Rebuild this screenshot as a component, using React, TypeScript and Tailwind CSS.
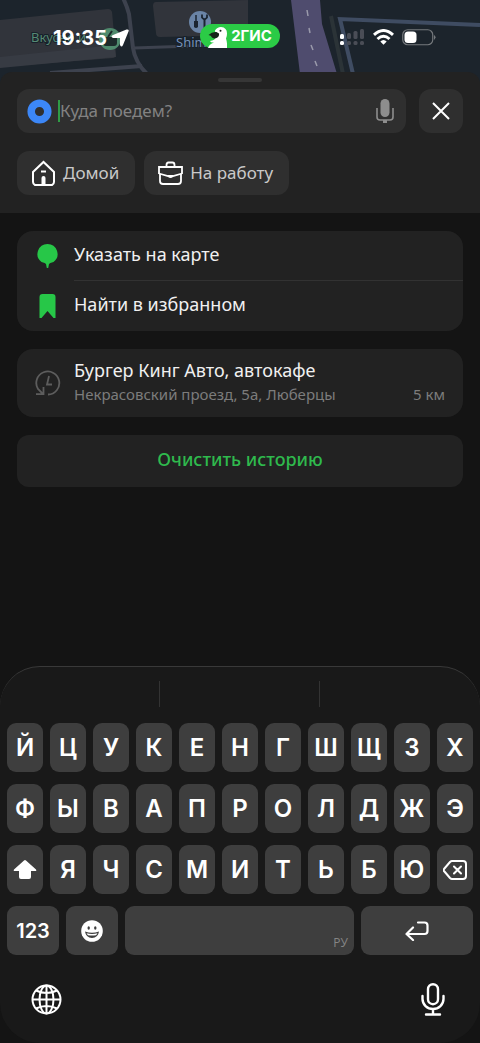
import type { ReactNode } from 'react';

const letterRows = ['ЙЦУКЕНГШЩЗХ', 'ФЫВАПРОЛДЖЭ'];
const lastLetters = 'ЯЧСМИТЬБЮ';

function MapBackdrop() {
  return (
    <svg
      className="absolute inset-0 h-full w-full"
      viewBox="0 0 480 84"
      preserveAspectRatio="xMidYMin slice"
      aria-hidden="true"
    >
      <rect width="480" height="84" fill="#1c242c" />
      <path d="M0 20 108 9q3 0 4 3l4 42q0 3-3 4L0 67Z" fill="#31343b" />
      <path d="M0 57 114 45l2 12L0 68Z" fill="#373b43" />
      <path d="M156 2 248 0v35l-88 2q-4 0-4-4l-3-27q0-4 3-4Z" fill="#31343b" />
      <path d="M123-2q4 8 6 16l4 34q2 14 14 26" fill="none" stroke="#3d424e" strokeWidth="4" />
      <path d="M134 48 250 44" stroke="#3d424e" strokeWidth="3" />
      <path d="M50 73 142 66" stroke="#3d424e" strokeWidth="4" />
      <path d="M291 0h29l2 24 15 50h-37Z" fill="#4f4c6e" />
      <path d="M307 10l1 6M309 28l1 5M311 45l2 5M315 61l2 5" stroke="#9a9aab" strokeWidth="1.5" />
      <path d="M331 16l12 58" stroke="#2b3337" strokeWidth="4" />
      <path d="M480 25 340 19l13 55" fill="none" stroke="#3f4c62" strokeWidth="4" />
      <circle cx="110" cy="39" r="11" fill="#4f8a6d" />
      <path d="M104 38h12v5q0 2-2 2h-8q-2 0-2-2ZM108 37l4-6" fill="#1c2b2b" stroke="#1c2b2b" strokeWidth="2" />
      <circle cx="200" cy="22" r="11" fill="#6a84a6" />
      <path d="M196 15v6" stroke="#1b2531" strokeWidth="1.500" />
      <path d="M194 21h4v6q-2 2-4 0Z" fill="#1b2531" />
      <path d="M204.500 19v9" stroke="#1b2531" strokeWidth="2" />
      <path d="M202 14.500v3q2.500 3.500 5 0v-3" stroke="#1b2531" strokeWidth="1.800" fill="none" />
      <g fontFamily="'Noto Sans', sans-serif" fontSize="13" stroke="#17202a" strokeWidth="2" paintOrder="stroke">
        <text x="31" y="42" fill="#578a74">Вкусно и</text>
        <text x="176" y="47" fill="#7591b8">Shimas</text>
      </g>
    </svg>
  );
}

function StatusBar() {
  return (
    <div className="relative grid grid-cols-3 items-center pt-[22px]">
      <div className="flex items-center justify-center gap-1 pt-1 pl-[22px]">
        <span className="font-[Inter,sans-serif] text-xl leading-6 font-bold text-white">19:35</span>
        <svg width="18" height="18" viewBox="0 0 18 18" fill="#fff" aria-hidden="true">
          <path d="M17.500 2.500 12 16q-1.500 3-3 0V9H2Q-1 7.500 2 6L15.500.5Q18.500 0 17.500 2.500Z" />
        </svg>
      </div>
      <div className="flex justify-center">
        <span className="flex h-6 items-center gap-1 rounded-full bg-[#2bcb46] pr-2 pl-2">
          <svg width="19" height="24" viewBox="0 0 19 24" aria-hidden="true">
            <path d="M7 6.500Q9 3 13 3q6 .5 6 6.500 0 3-1 5 1.500 5 1 9.500H0q1-4 6-5.500-3 .5-4-1.500 5-.5 6-4Z" fill="#fff" />
            <path d="M8.500 8Q4 7.500.5 11q2.500 0 3.500 2.500 2 1.500 4.500.5 3-1.500 2.500-4.500Z" fill="#16251a" />
            <circle cx="12.500" cy="6.800" r="1" fill="#16251a" />
          </svg>
          <span className="font-[Inter,sans-serif] text-[15px] leading-6 font-bold text-white">2ГИС</span>
        </span>
      </div>
      <div className="flex items-center justify-end gap-2 pt-0.5 pr-[44px]">
        <svg width="25" height="18" viewBox="0 0 25 18" fill="#4a4d56" aria-hidden="true">
          <rect y="6" width="4" height="5" rx="1.500" fill="#fff" />
          <rect y="13" width="4" height="4" rx="1.500" fill="#fff" />
          <rect x="7" y="5" width="4" height="6" rx="1.500" />
          <rect x="7" y="13" width="4" height="4" rx="1.500" />
          <rect x="13.500" y="3" width="4" height="8" rx="1.500" />
          <rect x="13.500" y="13" width="4" height="4" rx="1.500" />
          <rect x="20" y="1" width="4" height="10" rx="1.500" />
          <rect x="20" y="13" width="4" height="4" rx="1.500" />
        </svg>
        <svg width="21" height="16" viewBox="0 0 21 16" fill="none" stroke="#fff" strokeWidth="3" aria-hidden="true">
          <path d="M1 5.800q9.500-8.500 19 0M4.500 10q6-5.500 12 0" />
          <path d="M7.300 12.500q3.200-3 6.400 0l-3.200 3.300Z" fill="#fff" stroke="none" />
        </svg>
        <svg width="34" height="17" viewBox="0 0 34 17" aria-hidden="true">
          <rect x=".75" y=".75" width="30" height="15" rx="5" fill="none" stroke="#74787c" strokeWidth="1.200" />
          <rect x="2.500" y="2.500" width="12" height="11.500" rx="3.500" fill="#fff" />
          <path d="M32 6q3 2 0 5Z" fill="#74787c" />
        </svg>
      </div>
    </div>
  );
}

function SearchPanel() {
  return (
    <section className="relative -mt-3 rounded-t-xl bg-[#222222] px-[17px] pb-[18px]">
      <div className="mx-auto h-[17px] w-11 pt-1.5">
        <div className="h-1 rounded-full bg-[#363636]" />
      </div>
      <div className="flex gap-[13px]">
        <div className="flex h-11 flex-1 items-center rounded-xl bg-[#2f2f2f] pr-3 pl-2.5">
          <svg width="25" height="25" viewBox="0 0 25 25" aria-hidden="true">
            <circle cx="12.500" cy="12.500" r="8.300" fill="none" stroke="#3c87f7" strokeWidth="7.500" />
          </svg>
          <span className="ml-1.5 h-[22px] w-0.5 bg-[#2f9c45]" />
          <input
            type="text"
            aria-label="Куда поедем?"
            placeholder="Куда поедем?"
            className="min-w-0 flex-1 bg-transparent text-[17px] leading-6 text-white outline-none placeholder:text-[#828282]"
          />
          <button type="button" aria-label="Голосовой ввод">
            <svg width="18" height="26" viewBox="0 0 18 26" aria-hidden="true">
              <rect x="4.500" y="1" width="9" height="18" rx="4.500" fill="#8d8d8d" />
              <path d="M1 10v9q0 3 3 3h10q3 0 3-3v-9" fill="none" stroke="#8d8d8d" strokeWidth="1.600" />
              <path d="M7 22h4v3H7Z" fill="#8d8d8d" />
            </svg>
          </button>
        </div>
        <button
          type="button"
          aria-label="Закрыть"
          className="flex size-11 items-center justify-center rounded-xl bg-[#2f2f2f]"
        >
          <svg width="18" height="18" viewBox="0 0 18 18" stroke="#fff" strokeWidth="2" aria-hidden="true">
            <path d="M1 1l16 16M17 1 1 17" />
          </svg>
        </button>
      </div>
      <div className="mt-[18px] flex gap-[9px]">
        <button
          type="button"
          className="flex h-11 items-center gap-[7px] rounded-xl bg-[#2f2f2f] pr-4 pl-3.5 text-[17px] leading-6 text-[#c9c9c9]"
        >
          <svg width="25" height="26" viewBox="0 0 25 26" fill="none" stroke="#fff" strokeWidth="2" aria-hidden="true">
            <path d="M2 12 12.500 2 23 12v10q0 2-2 3H4q-2-1-2-3Z" />
            <path d="M10 11.500h5" />
            <path d="M10.500 24v-6q0-2 2-2t2 2v6Z" fill="#fff" stroke="none" />
          </svg>
          Домой
        </button>
        <button
          type="button"
          className="flex h-11 items-center gap-[7px] rounded-xl bg-[#2f2f2f] pr-4 pl-3.5 text-[17px] leading-6 text-[#c9c9c9]"
        >
          <svg width="25" height="24" viewBox="0 0 25 24" fill="none" stroke="#fff" strokeWidth="1.800" aria-hidden="true">
            <path d="M1 13V6h23v7M2 13v7q0 3 3 3h15q3 0 3-3v-7" />
            <path d="M8.500 6V4q0-2.500 2-2.500h4q2 0 2 2.500v2M1 12.500l9 2.500h5l9-2.500" />
            <path d="M10 14h5v2q-2.500 2-5 0Z" fill="#fff" stroke="none" />
          </svg>
          На работу
        </button>
      </div>
    </section>
  );
}

function Results() {
  return (
    <main className="flex flex-col gap-[18px] px-[17px] pt-[18px]">
      <div className="rounded-2xl bg-[#222222]">
        <button type="button" className="flex h-[49px] w-full items-center pl-5 text-left text-lg text-[#f0f0f0]">
          <svg width="21" height="26" viewBox="0 0 21 26" fill="#27c748" aria-hidden="true">
            <path d="M10.500 1a10 10 0 0 1 6 18q-4 1-4.500 2l-.8 4H9.800L9 21q-.5-1-4.500-2a10 10 0 0 1 6-18Z" />
          </svg>
          <span className="ml-4 pb-1">Указать на карте</span>
        </button>
        <div className="ml-[57px] h-px bg-[#323232]" />
        <button type="button" className="flex h-[50px] w-full items-center pl-5 text-left text-lg text-[#f0f0f0]">
          <svg width="21" height="26" viewBox="0 0 21 26" fill="#27c748" aria-hidden="true">
            <path d="M2.500 4q0-3 3-3h10q3 0 3 3v21h-2l-6-7-6 7h-2Z" />
          </svg>
          <span className="ml-4 pb-1">Найти в избранном</span>
        </button>
      </div>

      <a href="#place" className="flex h-[68px] items-center rounded-2xl bg-[#222222] px-[18px]">
        <svg width="26" height="26" viewBox="0 0 26 26" fill="none" stroke="#5d5d5d" strokeWidth="1.800" aria-hidden="true">
          <path d="M13 24.500A11.500 11.500 0 1 0 3 19l5 5M8.500 17v7.200H1M14 6l-2 8.500h5" />
        </svg>
        <span className="ml-[13px] flex min-w-0 flex-1 flex-col pb-0.5">
          <span className="text-lg leading-6 text-[#f0f0f0]">Бургер Кинг Авто, автокафе</span>
          <span className="flex justify-between text-[15px] leading-6 text-[#7c7c7c]">
            <span>Некрасовский проезд, 5а, Люберцы</span>
            <span>5 км</span>
          </span>
        </span>
      </a>

      <button type="button" className="h-[52px] rounded-xl bg-[#222222] pb-1 text-lg font-medium text-[#2fba4d]">
        Очистить историю
      </button>
    </main>
  );
}

function Key({ children, label, className = 'flex-1' }: { children?: ReactNode; label?: string; className?: string }) {
  return (
    <button
      type="button"
      aria-label={label}
      className={`flex h-[49px] min-w-0 items-center justify-center rounded-[9px] bg-[#3e3e3e] ${className}`}
    >
      {children}
    </button>
  );
}

function Keyboard() {
  return (
    <section
      aria-label="Клавиатура"
      className="mt-auto rounded-[40px] border-t border-[#393939] bg-[#191919] px-[7px] font-[Inter,sans-serif] text-2xl leading-7 font-semibold text-white"
    >
      <div className="-mx-[7px] grid h-14 grid-cols-3 pt-3.5 pb-4">
        <div className="border-r border-[#333333]" />
        <div className="border-r border-[#333333]" />
      </div>
      <div className="flex flex-col gap-3">
        {letterRows.map((row) => (
          <div key={row} className="flex gap-[7px]">
            {row.split('').map((letter) => (
              <Key key={letter}>{letter}</Key>
            ))}
          </div>
        ))}
        <div className="flex gap-[7px]">
          <Key label="Shift">
            <svg width="24" height="21" viewBox="0 0 24 21" fill="#fff" aria-hidden="true">
              <path d="M11 1.400q1-1 2 0L23 10.500q1 1.500-1 1.500h-4v6q0 2-2 2H8q-2 0-2-2v-6H2q-2 0-1-1.500Z" />
            </svg>
          </Key>
          {lastLetters.split('').map((letter) => (
            <Key key={letter}>{letter}</Key>
          ))}
          <Key label="Удалить">
            <svg width="24" height="20" viewBox="0 0 24 20" fill="none" stroke="#fff" strokeWidth="2" strokeLinecap="round" strokeLinejoin="round" aria-hidden="true">
              <path d="M9 1h11q3 0 3 3v12q0 3-3 3H9q-1 0-2-1l-6-7q-1-1 0-2l6-7q1-1 2-1ZM11 6.500l7 7M18 6.500l-7 7" />
            </svg>
          </Key>
        </div>
        <div className="flex gap-[7px]">
          <Key className="w-[52px]">
            <span className="text-xl">123</span>
          </Key>
          <Key label="Эмодзи" className="w-[52px]">
            <svg width="22" height="22" viewBox="0 0 22 22" aria-hidden="true">
              <circle cx="11" cy="11" r="10.800" fill="#fff" />
              <ellipse cx="7.700" cy="8" rx="1.200" ry="1.700" fill="#3e3e3e" />
              <ellipse cx="14.300" cy="8" rx="1.200" ry="1.700" fill="#3e3e3e" />
              <path d="M4 11.500q7 2.500 14 0-1 6.500-7 6.500t-7-6.500Z" fill="#3e3e3e" />
              <path d="M5.500 13.300q5.500 1.500 11 0-.5 1.200-1.500 1.900-4 .8-8 0-1-.7-1.500-1.900Z" fill="#fff" />
            </svg>
          </Key>
          <Key label="Пробел" className="flex-1">
            <span className="ml-auto self-end pr-1.5 pb-0.5 font-['Open_Sans',sans-serif] text-xs leading-5 font-normal text-[#858585]">
              РУ
            </span>
          </Key>
          <Key label="Ввод" className="w-28">
            <svg width="24" height="20" viewBox="0 0 24 20" fill="none" stroke="#fff" strokeWidth="2.200" strokeLinecap="round" strokeLinejoin="round" aria-hidden="true">
              <path d="M13 1.500h6.500q3 0 3 3V10q0 3-3 3H1.500M8 6.500 1.500 13 8 19" />
            </svg>
          </Key>
        </div>
      </div>
      <div className="flex h-[88px] items-center justify-between pr-7 pl-6">
        <button type="button" aria-label="Сменить язык">
          <svg width="31" height="31" viewBox="0 0 31 31" fill="none" stroke="#fff" strokeWidth="2" aria-hidden="true">
            <circle cx="15.500" cy="15.500" r="14" />
            <ellipse cx="15.500" cy="15.500" rx="7" ry="14" />
            <path d="M15.500 1.500v28M1.500 15.500h28M5 6.500q10.500 5 21 0M5 24.500q10.500-5 21 0" />
          </svg>
        </button>
        <button type="button" aria-label="Диктовка">
          <svg width="24" height="33" viewBox="0 0 24 33" fill="none" stroke="#fff" strokeWidth="2.400" strokeLinecap="round" aria-hidden="true">
            <rect x="7" y="1.200" width="10" height="20" rx="5" />
            <path d="M1.500 13v3a10.500 10 0 0 0 21 0v-3M12 26v5.500M5 31.500h14" />
          </svg>
        </button>
      </div>
    </section>
  );
}

export default function App() {
  return (
    <div className="flex min-h-screen flex-col bg-[#141414] font-['Noto_Sans',sans-serif]">
      <header className="relative h-[84px] overflow-hidden">
        <MapBackdrop />
        <StatusBar />
      </header>
      <SearchPanel />
      <Results />
      <Keyboard />
    </div>
  );
}
